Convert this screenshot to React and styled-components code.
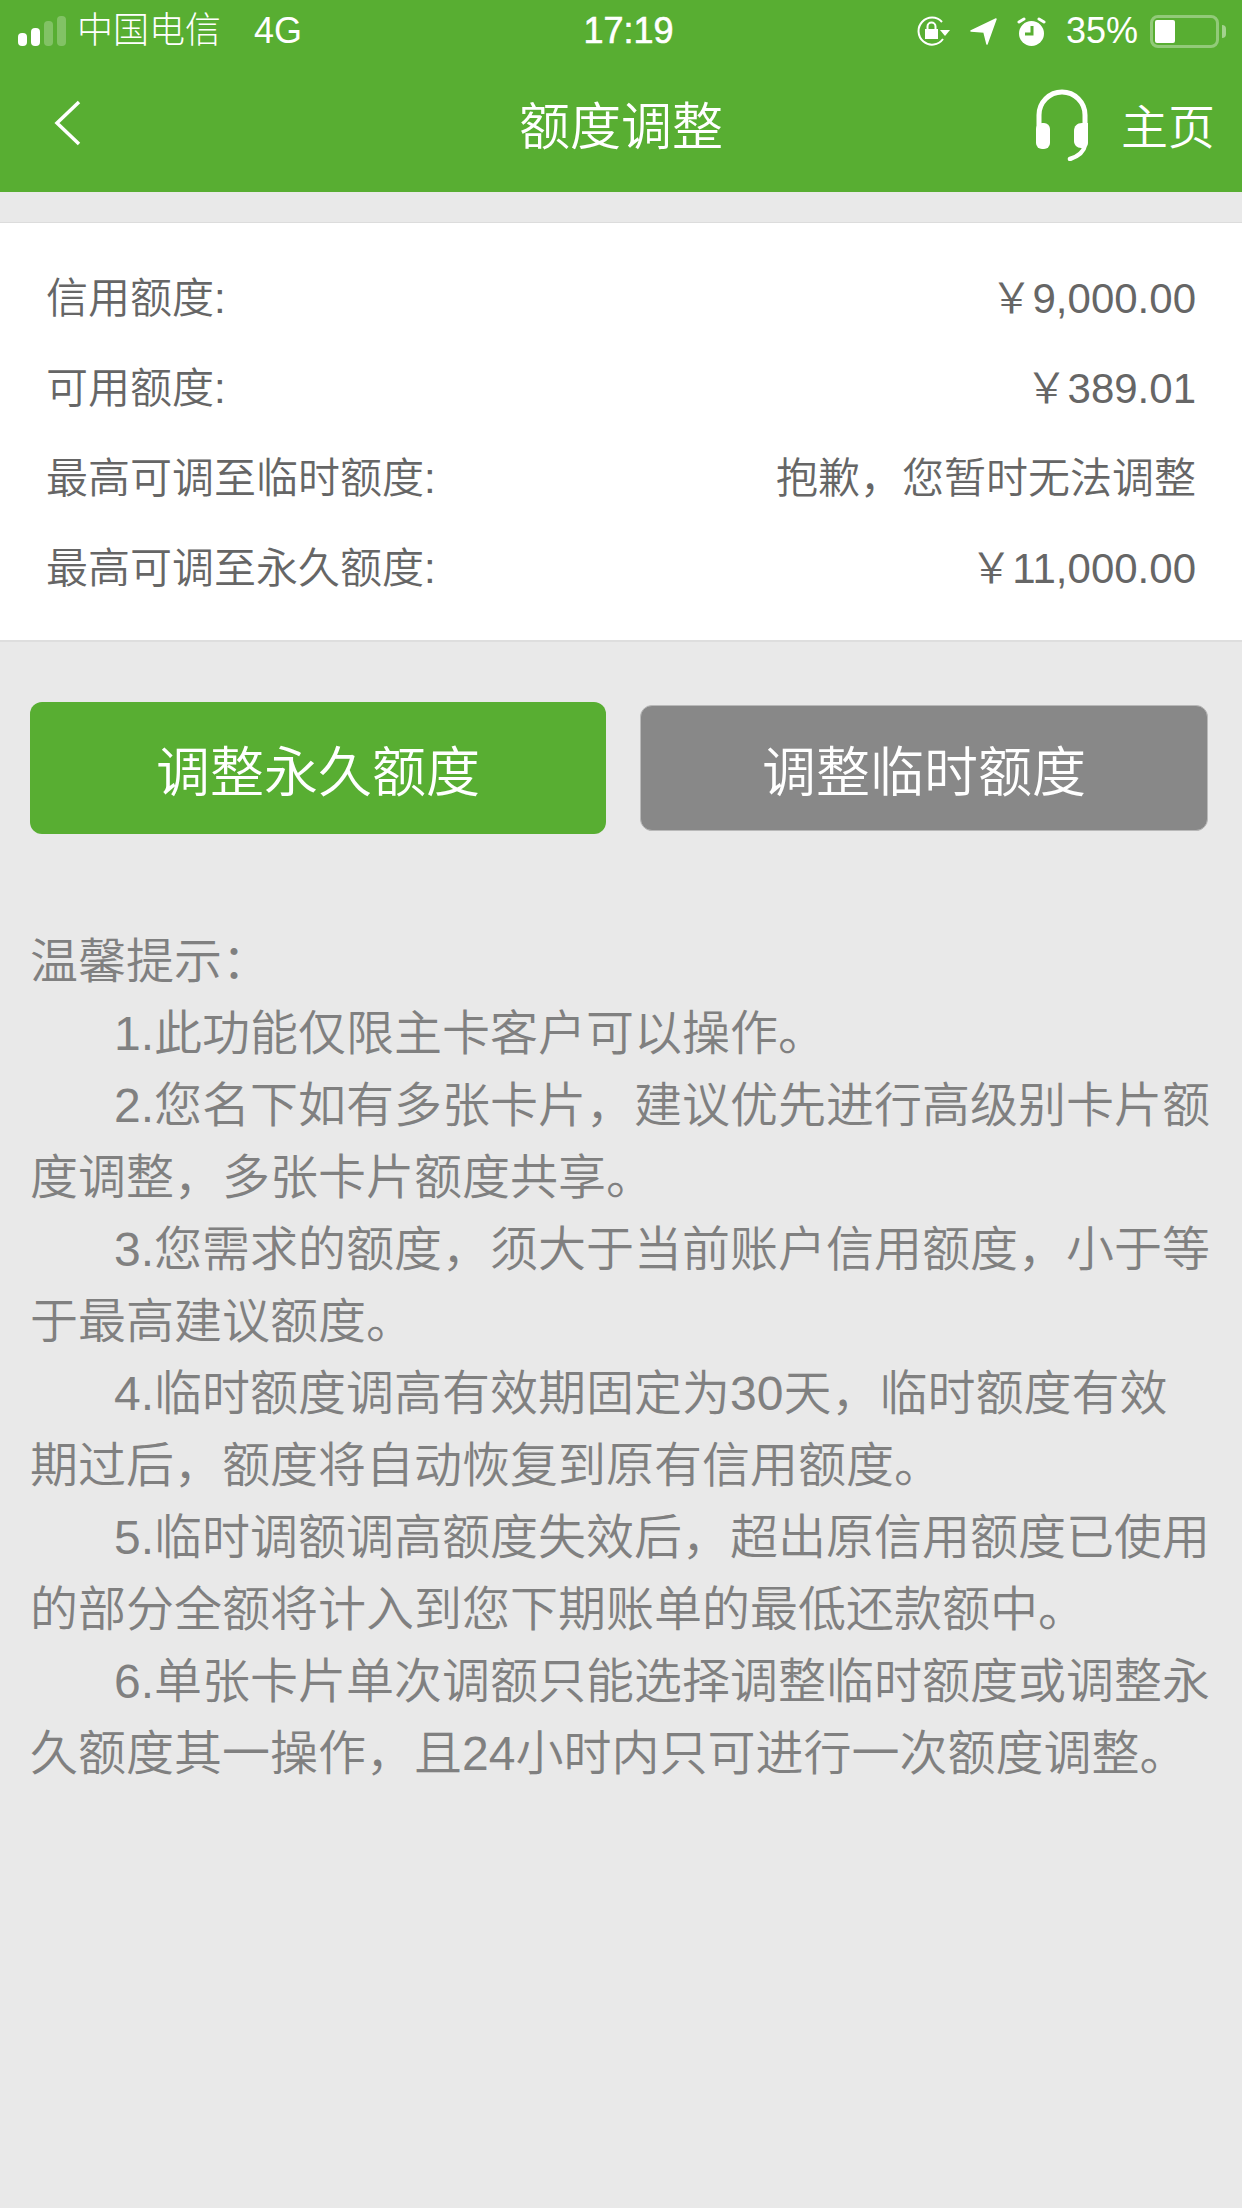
import React from "react";
import styled, { createGlobalStyle } from "styled-components";

const GlobalStyle = createGlobalStyle`
  html, body {
    margin: 0;
    padding: 0;
    background: #e9e9e9;
  }
  * { box-sizing: border-box; }
`;

const FONT = `"Liberation Sans", "Noto Sans CJK SC", sans-serif`;

const Page = styled.div`
  width: 1242px;
  height: 2208px;
  background: #e9e9e9;
  font-family: ${FONT};
  overflow: hidden;
`;

const Header = styled.header`
  height: 192px;
  background: #58ae32;
  color: #fff;
`;

const StatusBar = styled.div`
  height: 62px;
  padding: 0 15px 0 18px;
  display: grid;
  grid-template-columns: 1fr auto 1fr;
  align-items: center;
  font-size: 36px;
  font-weight: 300;
  line-height: 1;
`;

const StatusLeft = styled.div`
  display: flex;
  align-items: center;
`;

const StatusRight = styled.div`
  display: flex;
  align-items: center;
  justify-content: flex-end;
  gap: 20px;
`;

const Carrier = styled.span`
  margin-left: 11px;
`;

const Network = styled.span`
  margin-left: 33px;
`;

const Clock = styled.span`
  -webkit-text-stroke: 0.6px #fff;
  margin-left: 12px;
`;

const Bars = styled.div`
  display: flex;
  align-items: flex-end;
  gap: 4px;
  height: 30px;
`;

const Bar = styled.i`
  display: block;
  width: 9px;
  height: ${(p) => p.$h}px;
  border-radius: 4px;
  background: ${(p) => (p.$on ? "#fff" : "rgba(255,255,255,.25)")};
`;

const Battery = styled.div`
  width: 69px;
  height: 33px;
  border: 3px solid rgba(255, 255, 255, 0.35);
  border-radius: 8px;
  padding: 2px;
  margin: 0 8px 0 -8px;
  position: relative;

  &::before {
    content: "";
    display: block;
    width: 20px;
    height: 100%;
    background: #fff;
    border-radius: 2px;
  }

  &::after {
    content: "";
    position: absolute;
    right: -10px;
    top: 7px;
    width: 4px;
    height: 13px;
    border-radius: 0 4px 4px 0;
    background: rgba(255, 255, 255, 0.45);
  }
`;

const NavBar = styled.div`
  height: 130px;
  padding: 0 27px 0 53px;
  display: grid;
  grid-template-columns: 1fr auto 1fr;
  align-items: center;
`;

const BackLink = styled.div`
  display: flex;
  margin-bottom: 8px;
`;

const Title = styled.h1`
  margin: 0 26px 0 0;
  font-size: 51px;
  font-weight: 350;
  line-height: 1;
`;

const NavRight = styled.div`
  display: flex;
  align-items: center;
  justify-content: flex-end;
  gap: 33px;
  font-size: 47px;
  font-weight: 350;
  line-height: 1;

  svg {
    margin-bottom: 5px;
  }
`;

const Gap = styled.div`
  height: 31px;
  border-bottom: 1px solid #dcdcdc;
`;

const Card = styled.section`
  background: #fff;
  padding: 31px 46px 26px;
  border-bottom: 2px solid #dedede;
`;

const Row = styled.div`
  height: 90px;
  display: flex;
  align-items: center;
  justify-content: space-between;
  font-size: 42px;
  font-weight: 350;
  line-height: 1;
  color: #666;
`;

const Actions = styled.div`
  display: grid;
  grid-template-columns: 576px 568px;
  justify-content: space-between;
  align-items: center;
  padding: 60px 34px 0 30px;
`;

const ActionButton = styled.button`
  height: ${(p) => (p.$muted ? 126 : 132)}px;
  border: ${(p) => (p.$muted ? "1px solid #b9b9b9" : "none")};
  border-radius: 12px;
  background: ${(p) => (p.$muted ? "#888888" : "#58ae32")};
  color: #fff;
  font-family: ${FONT};
  font-size: 54px;
  font-weight: 350;
  padding: 0;
`;

const Tips = styled.div`
  margin-top: 92px;
  padding: 0 30px;
  font-size: 48px;
  font-weight: 350;
  line-height: 72px;
  color: #808080;
`;

const TipItem = styled.p`
  margin: 0;
  text-indent: 84px;
`;

const TipTitle = styled.p`
  margin: 0;
`;

const SignalBars = () => (
  <Bars>
    <Bar $on $h={13} />
    <Bar $on $h={18} />
    <Bar $h={25} />
    <Bar $h={30} />
  </Bars>
);

// rotation lock: open ring, arrow head and padlock
const LockIcon = () => (
  <svg width="34" height="30" viewBox="0 0 34 30" fill="none">
    <path d="M26 6A13.5 13.5 0 1 0 27 23" stroke="#fff" strokeWidth="2" />
    <path d="M24 14h10l-5 6z" fill="#fff" />
    <rect x="9" y="13" width="13" height="10" fill="#fff" />
    <path d="M11.5 13v-2.5a4 4 0 0 1 8 0V13" stroke="#fff" strokeWidth="2" />
  </svg>
);

const LocationIcon = () => (
  <svg width="27" height="27" viewBox="0 0 27 27">
    <path d="M1 13 26 1 17 26 14 14z" fill="#fff" stroke="#fff" strokeWidth="1.5" strokeLinejoin="round" />
  </svg>
);

const AlarmIcon = () => (
  <svg width="29" height="29" viewBox="0 0 29 29">
    <ellipse cx="14.5" cy="16.5" rx="12.5" ry="12.5" fill="#fff" />
    <path d="M2 5l5-3M27 5l-5-3" stroke="#fff" strokeWidth="3" strokeLinecap="round" />
    <path d="M15 9v8H8" stroke="#58ae32" strokeWidth="3" fill="none" />
  </svg>
);

const BackIcon = () => (
  <svg width="28" height="46" viewBox="0 0 28 46" fill="none">
    <path d="M26 2 4 23l22 21" stroke="#fff" strokeWidth="3.5" />
  </svg>
);

const HeadsetIcon = () => (
  <svg width="52" height="72" viewBox="0 0 52 72" fill="none">
    <path d="M3 42V26a23 23 0 0 1 46 0v16" stroke="#fff" strokeWidth="5" />
    <rect x="0" y="34" width="14" height="26" rx="6" fill="#fff" />
    <path d="M38 42c0-5 3-8 8-8h6v20c0 4-4 5-7 5-4 0-7-3-7-7z" fill="#fff" />
    <path d="M49 56c-1 6-6 11-15 14" stroke="#fff" strokeWidth="4.5" strokeLinecap="round" />
  </svg>
);

const balances = [
  ["信用额度:", "￥9,000.00"],
  ["可用额度:", "￥389.01"],
  ["最高可调至临时额度:", "抱歉，您暂时无法调整"],
  ["最高可调至永久额度:", "￥11,000.00"],
];

const tips = [
  "1.此功能仅限主卡客户可以操作。",
  "2.您名下如有多张卡片，建议优先进行高级别卡片额度调整，多张卡片额度共享。",
  "3.您需求的额度，须大于当前账户信用额度，小于等于最高建议额度。",
  "4.临时额度调高有效期固定为30天，临时额度有效期过后，额度将自动恢复到原有信用额度。",
  "5.临时调额调高额度失效后，超出原信用额度已使用的部分全额将计入到您下期账单的最低还款额中。",
  "6.单张卡片单次调额只能选择调整临时额度或调整永久额度其一操作，且24小时内只可进行一次额度调整。",
];

export default function App() {
  return (
    <Page>
      <GlobalStyle />
      <Header>
        <StatusBar>
          <StatusLeft>
            <SignalBars />
            <Carrier>中国电信</Carrier>
            <Network>4G</Network>
          </StatusLeft>
          <Clock>17:19</Clock>
          <StatusRight>
            <LockIcon />
            <LocationIcon />
            <AlarmIcon />
            <span>35%</span>
            <Battery />
          </StatusRight>
        </StatusBar>
        <NavBar>
          <BackLink>
            <BackIcon />
          </BackLink>
          <Title>额度调整</Title>
          <NavRight>
            <HeadsetIcon />
            <span>主页</span>
          </NavRight>
        </NavBar>
      </Header>
      <Gap />
      <Card>
        {balances.map(([label, value]) => (
          <Row key={label}>
            <span>{label}</span>
            <span>{value}</span>
          </Row>
        ))}
      </Card>
      <Actions>
        <ActionButton>调整永久额度</ActionButton>
        <ActionButton $muted>调整临时额度</ActionButton>
      </Actions>
      <Tips>
        <TipTitle>温馨提示：</TipTitle>
        {tips.map((tip) => (
          <TipItem key={tip}>{tip}</TipItem>
        ))}
      </Tips>
    </Page>
  );
}
